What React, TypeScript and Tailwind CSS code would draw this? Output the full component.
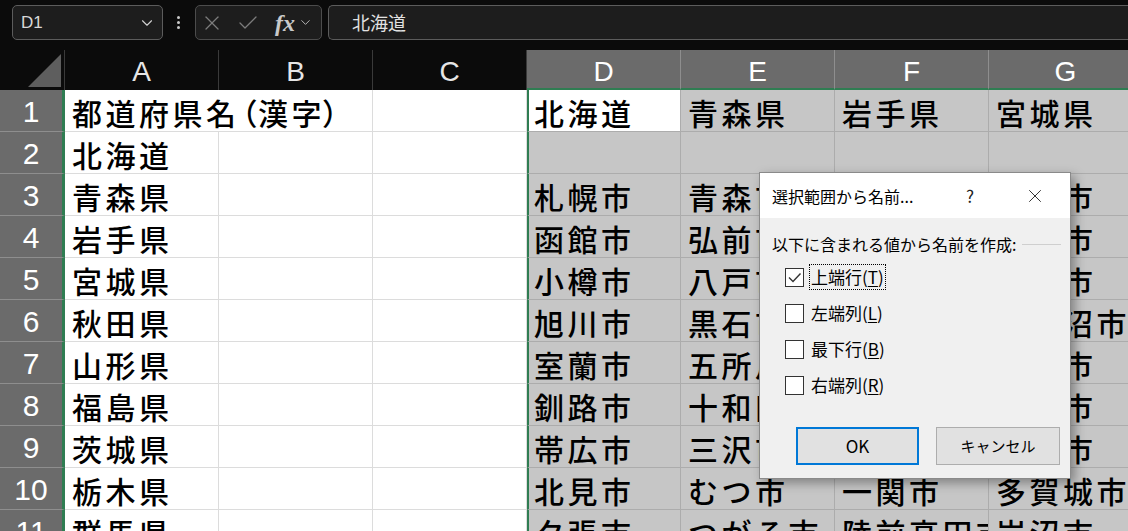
import { Check, ChevronDown, X } from 'lucide-react';

const prefectures = [
    '',
    '北海道',
    '青森県',
    '岩手県',
    '宮城県',
    '秋田県',
    '山形県',
    '福島県',
    '茨城県',
    '栃木県',
    '群馬県',
];

// D..G, one array per row
const selected = [
    ['北海道', '青森県', '岩手県', '宮城県'],
    ['', '', '', ''],
    ['札幌市', '青森市', '盛岡市', '仙台市'],
    ['函館市', '弘前市', '宮古市', '石巻市'],
    ['小樽市', '八戸市', '大船渡市', '塩竈市'],
    ['旭川市', '黒石市', '花巻市', '気仙沼市'],
    ['室蘭市', '五所川原市', '北上市', '白石市'],
    ['釧路市', '十和田市', '久慈市', '名取市'],
    ['帯広市', '三沢市', '遠野市', '角田市'],
    ['北見市', 'むつ市', '一関市', '多賀城市'],
    ['夕張市', 'つがる市', '陸前高田市', '岩沼市'],
];

const cellText =
    "overflow-hidden whitespace-nowrap pt-[2px] text-[30px] font-medium leading-[40px] tracking-[3.5px] text-black font-['Noto_Sans_CJK_JP',sans-serif]";

function FormulaBar() {
    return (
        <div className="flex h-[50px] items-start bg-[#0b0b0b] pt-[5px]">
            <div className="ml-[12px] flex h-[35px] w-[151px] items-center justify-between rounded-[5px] border border-[#5c5c5c] bg-[#1d1d1d] pl-[8px] pr-[6px]">
                <span className="font-['Liberation_Sans',sans-serif] text-[17px] text-[#d8d8d8]">
                    D1
                </span>
                <ChevronDown size={18} strokeWidth={1.5} className="text-[#d0d0d0]" />
            </div>
            <div className="ml-[14px] mr-[15px] flex h-[35px] flex-col items-center justify-center gap-[2px]">
                <div className="h-[3px] w-[3px] rounded-full bg-[#c8c8c8]" />
                <div className="h-[3px] w-[3px] rounded-full bg-[#c8c8c8]" />
                <div className="h-[3px] w-[3px] rounded-full bg-[#c8c8c8]" />
            </div>
            <div className="flex h-[35px] w-[127px] items-center rounded-[5px] border border-[#4c4c4c] bg-[#1d1d1d] pl-[4px]">
                <X size={24} strokeWidth={1.3} className="text-[#7c7c7c]" />
                <Check size={24} strokeWidth={1.3} className="ml-[12px] text-[#7c7c7c]" />
                <span className="ml-[15px] font-['Liberation_Serif',serif] text-[24px] font-bold italic leading-none text-[#c9c9c9]">
                    fx
                </span>
                <ChevronDown size={15} strokeWidth={1.5} className="ml-[3px] text-[#bdbdbd]" />
            </div>
            <div className="ml-[6px] flex h-[35px] flex-1 items-center rounded-l-[5px] border border-r-0 border-[#5c5c5c] bg-[#1d1d1d] pl-[23px] font-['Noto_Sans_CJK_JP',sans-serif] text-[18px] text-[#e2e2e2]">
                北海道
            </div>
        </div>
    );
}

function Sheet() {
    const headLetter =
        "flex justify-center pt-[3px] font-['Liberation_Sans',sans-serif] text-[28px] leading-[37px]";

    return (
        <div className="grid grid-cols-[65px_repeat(7,154px)] grid-rows-[40px_repeat(11,42px)]">
            {/* header row */}
            <div className="relative border-r border-[#3a3a3a] bg-[#0b0b0b]">
                <svg className="absolute bottom-[3px] right-[3px]" width="33" height="33" viewBox="0 0 33 33">
                    <polygon points="33,0 33,33 0,33" fill="#5e5e5e" />
                </svg>
            </div>
            {['A', 'B', 'C'].map((c) => (
                <div
                    key={c}
                    className={`${headLetter} border-r border-[#3a3a3a] bg-[#0b0b0b] text-[#e6e6e6]`}
                >
                    {c}
                </div>
            ))}
            {['D', 'E', 'F', 'G'].map((c) => (
                <div
                    key={c}
                    className={`${headLetter} border-b-2 border-r border-b-[#2f7d52] border-r-[#8e8e8e] bg-[#6b6b6b] text-white`}
                >
                    {c}
                </div>
            ))}

            {prefectures.map((pref, i) => (
                <Row key={i} index={i} pref={pref} cells={selected[i]} />
            ))}
        </div>
    );
}

function Row({ index, pref, cells }: { index: number; pref: string; cells: string[] }) {
    return (
        <>
            <div className="flex justify-center border-b border-r-[3px] border-b-[#8e8e8e] border-r-[#2f7d52] bg-[#6b6b6b] pt-[3px] font-['Liberation_Sans',sans-serif] text-[30px] leading-[37px] text-white">
                {index + 1}
            </div>
            {index === 0 ? (
                <div className={`col-span-2 border-b border-r border-[#dcdcdc] bg-white pl-[7px] ${cellText}`}>
                    都道府県名<span className="ml-[-12px] mr-[-3px]">（</span>漢字<span className="ml-[-3px]">）</span>
                </div>
            ) : (
                <>
                    <div className={`border-b border-r border-[#dcdcdc] bg-white pl-[7px] ${cellText}`}>
                        {pref}
                    </div>
                    <div className="border-b border-r border-[#dcdcdc] bg-white" />
                </>
            )}
            <div className="border-b border-r border-[#dcdcdc] bg-white" />
            {cells.map((text, j) => (
                <div
                    key={j}
                    className={`border-b border-r border-[#acacac] ${cellText} ${
                        j === 0 ? 'border-l-2 border-l-[#2f7d52] pl-[5px]' : 'pl-[7px]'
                    } ${index === 0 && j === 0 ? 'bg-white' : 'bg-[#c6c6c6]'}`}
                >
                    {text}
                </div>
            ))}
        </>
    );
}

function CheckRow({ checked, label, accel, focused }: { checked?: boolean; label: string; accel: string; focused?: boolean }) {
    return (
        <div className="flex h-[36px] items-center">
            <div className="flex h-[19px] w-[19px] items-center justify-center border border-[#333333] bg-white">
                {checked && (
                    <svg width="15" height="15" viewBox="0 0 15 15">
                        <path d="M2 7.5 L6 11.5 L13.5 3.5" fill="none" stroke="#333333" strokeWidth="1.4" />
                    </svg>
                )}
            </div>
            <span
                className={`ml-[5px] flex h-[26px] items-center px-[1px] text-[17px] text-black ${
                    focused ? 'border border-dotted border-black' : 'border border-transparent'
                }`}
            >
                {label}(<span className="underline underline-offset-2">{accel}</span>)
            </span>
        </div>
    );
}

function Dialog() {
    return (
        <div className="absolute left-[759px] top-[172px] flex h-[307px] w-[312px] flex-col border border-[#8a8a8a] bg-[#f0f0f0] font-['Noto_Sans_CJK_JP',sans-serif] shadow-[4px_4px_10px_rgba(0,0,0,0.35)]">
            <div className="flex h-[45px] items-center bg-white pl-[12px] text-[16px] text-black">
                <span className="w-[194px]">選択範囲から名前...</span>
                <span className="text-[17px] text-[#222]">?</span>
                <X size={22} strokeWidth={1} className="ml-[50px] text-[#222]" />
            </div>
            <div className="flex items-center pl-[12px] pr-[9px] pt-[14px]">
                <span className="text-[16px] text-black">以下に含まれる値から名前を作成:</span>
                <div className="ml-[6px] h-px flex-1 bg-[#cfcfcf]" />
            </div>
            <div className="flex flex-col pl-[25px] pt-[3px]">
                <CheckRow checked focused label="上端行" accel="T" />
                <CheckRow label="左端列" accel="L" />
                <CheckRow label="最下行" accel="B" />
                <CheckRow label="右端列" accel="R" />
            </div>
            <div className="mt-auto mb-[13px] flex gap-[17px] pl-[36px]">
                <button className="flex h-[38px] w-[123px] items-center justify-center border-2 border-[#0078d7] bg-[#e1e1e1] text-[17px] text-black">
                    OK
                </button>
                <button className="flex h-[38px] w-[124px] items-center justify-center border border-[#adadad] bg-[#e1e1e1] text-[15px] text-black">
                    キャンセル
                </button>
            </div>
        </div>
    );
}

export default function App() {
    return (
        <div className="relative h-[531px] w-[1128px] overflow-hidden bg-[#0b0b0b]">
            <FormulaBar />
            <Sheet />
            <Dialog />
        </div>
    );
}
